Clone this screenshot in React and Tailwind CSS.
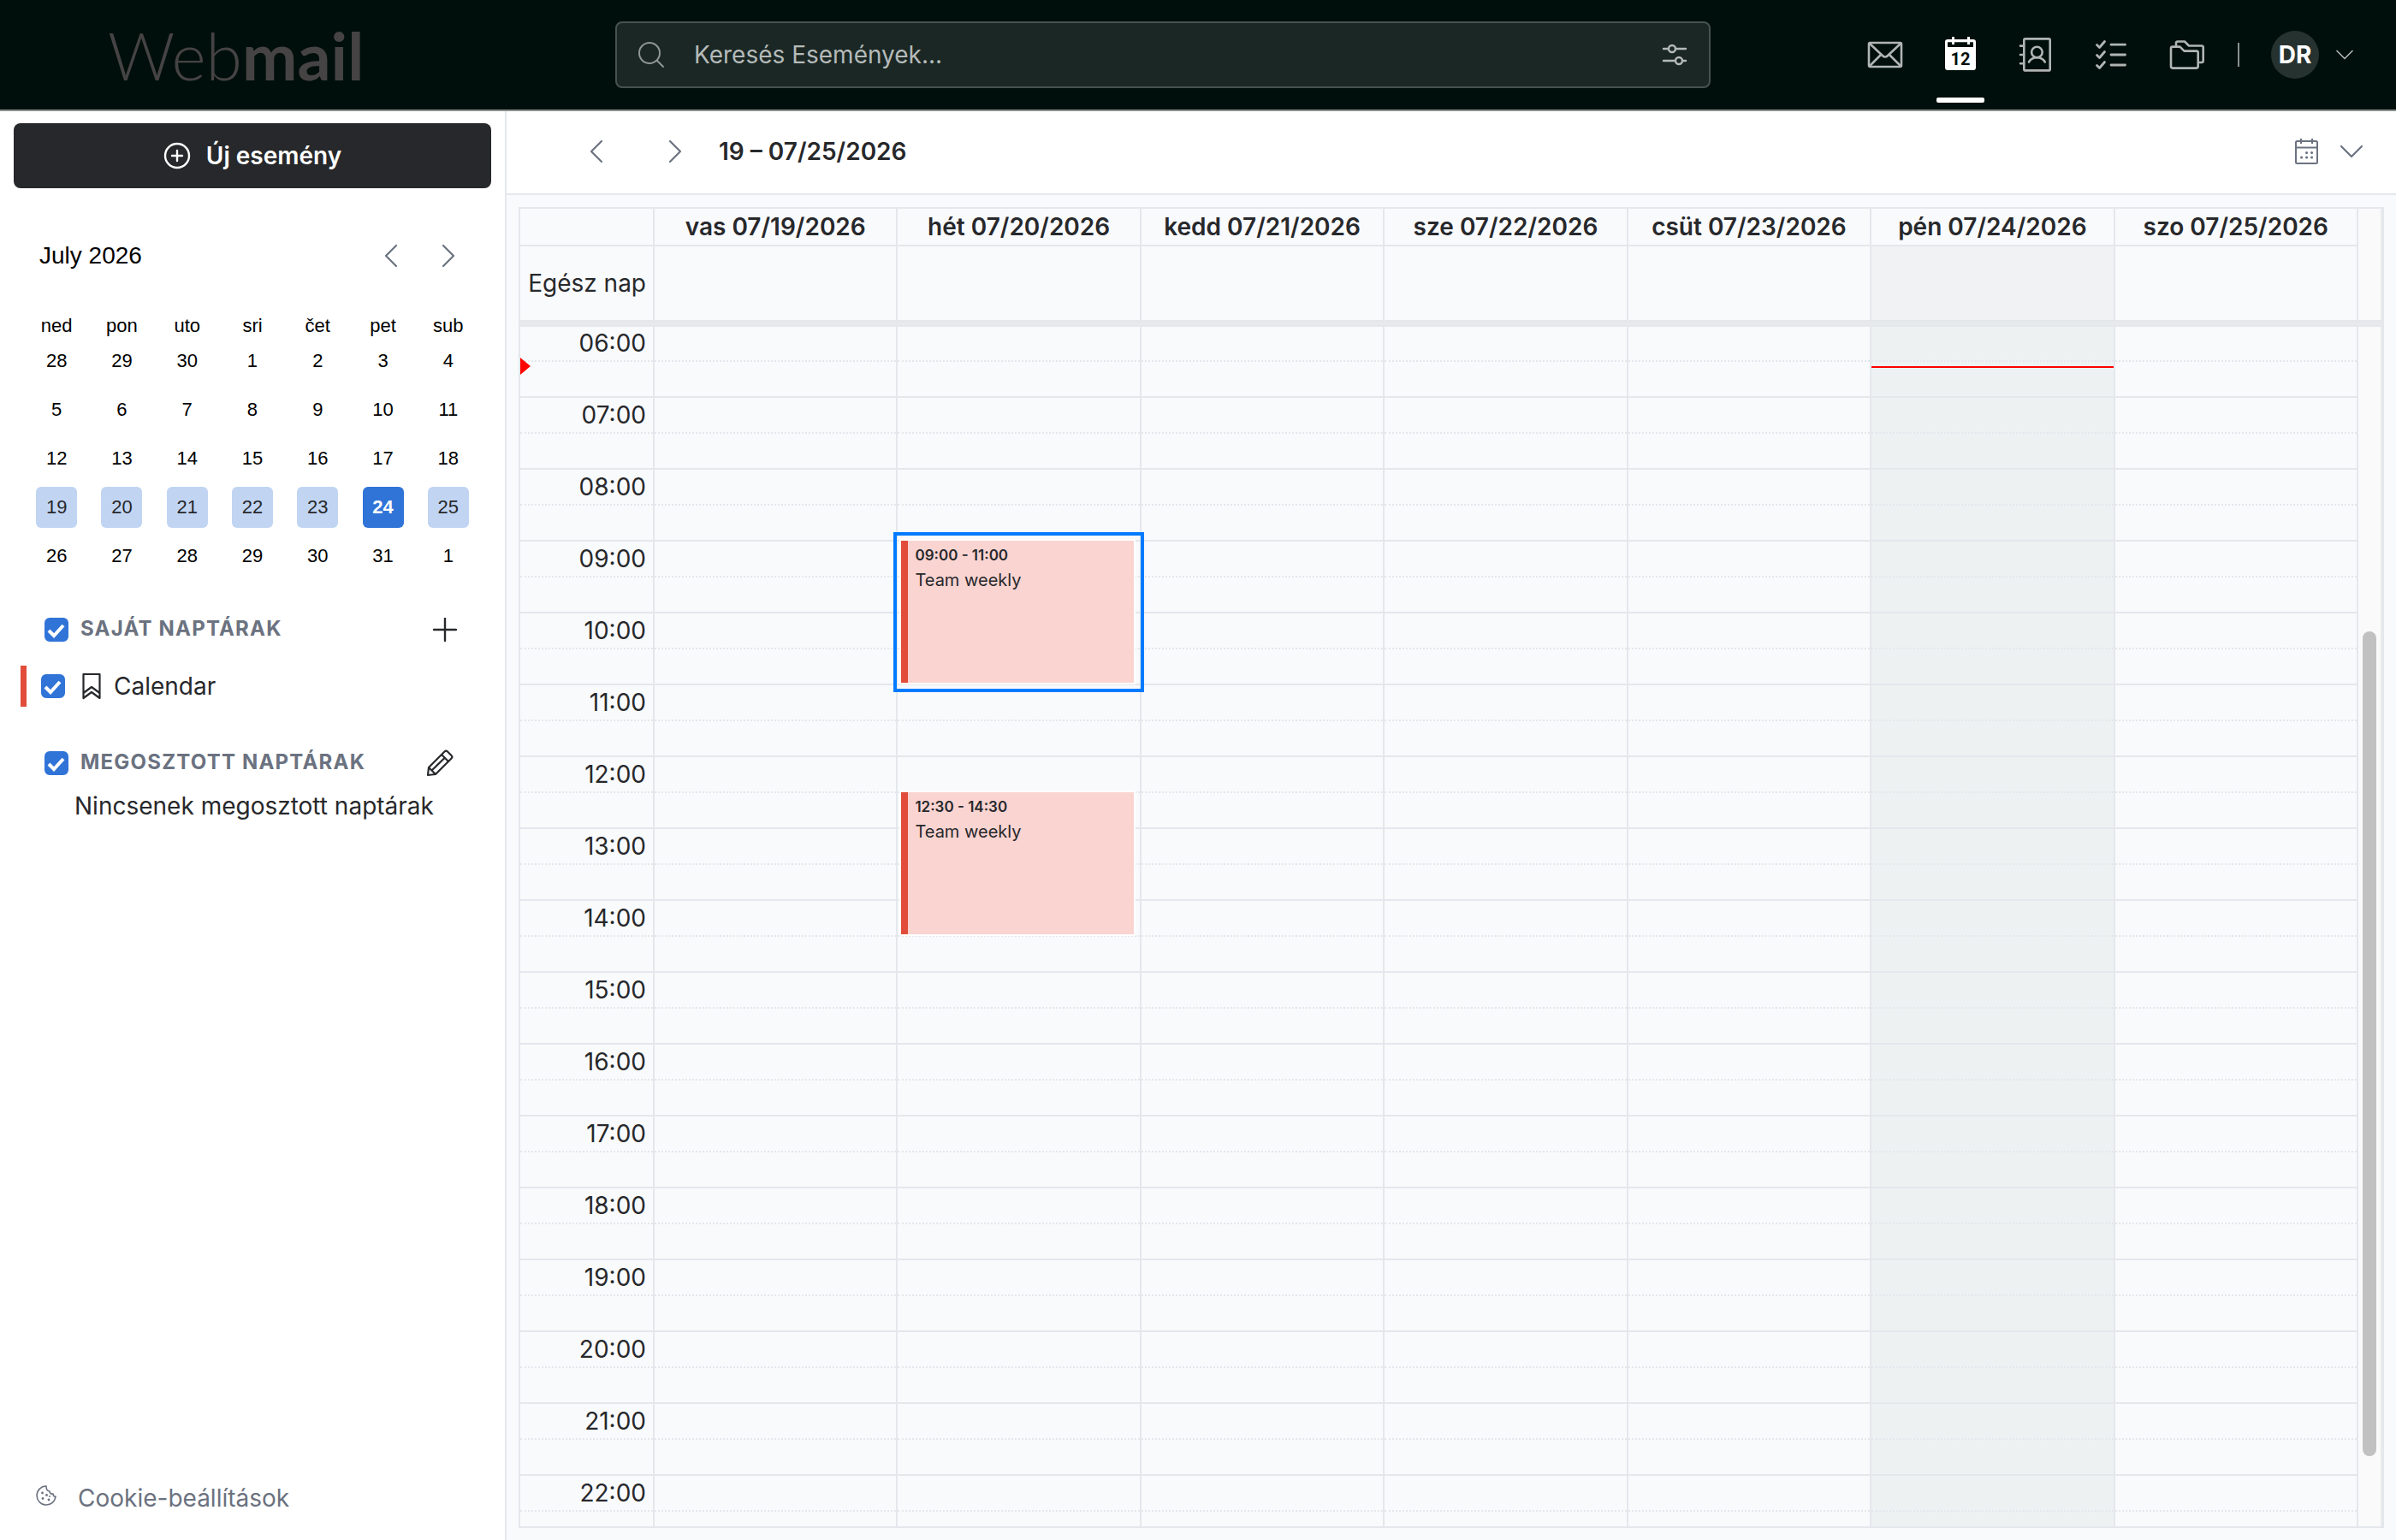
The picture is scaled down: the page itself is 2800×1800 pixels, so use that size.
import { useState } from 'react';

const hours = ['06:00', '07:00', '08:00', '09:00', '10:00', '11:00', '12:00', '13:00', '14:00', '15:00', '16:00', '17:00', '18:00', '19:00', '20:00', '21:00', '22:00'];

const days = [
  { label: 'vas 07/19/2026' },
  {
    label: 'hét 07/20/2026',
    events: [
      { time: '09:00 - 11:00', title: 'Team weekly', start: 9, end: 11 },
      { time: '12:30 - 14:30', title: 'Team weekly', start: 12.5, end: 14.5 },
    ],
  },
  { label: 'kedd 07/21/2026' },
  { label: 'sze 07/22/2026' },
  { label: 'csüt 07/23/2026' },
  { label: 'pén 07/24/2026', today: true },
  { label: 'szo 07/25/2026' },
];

const FIRST_HOUR = 6;
const HOUR_HEIGHT = 84;

const weekdays = ['ned', 'pon', 'uto', 'sri', 'čet', 'pet', 'sub'];
const weeks = [
  [28, 29, 30, 1, 2, 3, 4],
  [5, 6, 7, 8, 9, 10, 11],
  [12, 13, 14, 15, 16, 17, 18],
  [19, 20, 21, 22, 23, 24, 25],
  [26, 27, 28, 29, 30, 31, 1],
];

function Chevron({ dir, className }) {
  const points = {
    left: '19,4 7,16 19,28',
    right: '7,4 19,16 7,28',
    down: '4,10 16,22 28,10',
  };
  return (
    <svg viewBox={dir === 'down' ? '0 0 32 32' : '0 0 26 32'} className={className} fill="none" stroke="currentColor" strokeWidth="2.2" strokeLinecap="round" strokeLinejoin="round">
      <polyline points={points[dir]} />
    </svg>
  );
}

function MailIcon() {
  return (
    <svg viewBox="0 0 48 48" className="size-12" fill="none" stroke="currentColor" strokeWidth="2.6" strokeLinejoin="round">
      <rect x="5" y="10" width="38" height="28" rx="1.5" />
      <path d="M6 11l15.500 14.500a3.600 3.600 0 0 0 5 0L42 11M6 37l13.500-13.500M42 37L28.500 23.500" />
    </svg>
  );
}

function CalendarIcon() {
  return (
    <svg viewBox="0 0 48 48" className="size-12">
      <path fill="currentColor" fillRule="evenodd" d="M9 6h5V3h3v3h15V3h3v3h4a3 3 0 0 1 3 3v30a3 3 0 0 1-3 3H9a3 3 0 0 1-3-3V9a3 3 0 0 1 3-3zM9 9.300V15h30V9.300h-4V12h-3V9.300H17V12h-3V9.300z" />
      <text x="24" y="36" textAnchor="middle" className="fill-[#000f0b] font-['Roboto'] text-[20px] font-bold">12</text>
    </svg>
  );
}

function ContactsIcon() {
  return (
    <svg viewBox="0 0 48 48" className="size-12" fill="none" stroke="currentColor" strokeWidth="2.6" strokeLinecap="round">
      <rect x="10.3" y="5.400" width="30.400" height="37" rx="1.5" />
      <path d="M6 13.600h4M6 24h4M6 34.300h4" />
      <circle cx="25.400" cy="21" r="6.300" />
      <path d="M16 32.500c1.700-3 5-5.200 9.400-5.200s7.700 2.200 9.400 5.200" />
    </svg>
  );
}

function TasksIcon() {
  return (
    <svg viewBox="0 0 48 48" className="size-12" fill="none" stroke="currentColor" strokeWidth="2.800" strokeLinecap="round" strokeLinejoin="round">
      <path d="M24 12.200h16.500M24 24h16.500M24 36h16.500" />
      <path d="M7.500 12.500l3 3 6-7M7.500 24.500l3 3 6-7M7.500 36.500l3 3 6-7" />
    </svg>
  );
}

function FoldersIcon() {
  return (
    <svg viewBox="0 0 48 48" className="size-12" fill="none" stroke="currentColor" strokeWidth="2.600" strokeLinejoin="round">
      <path d="M6 16.600a2 2 0 0 1 2-2h8.500l5 5h14.200a2 2 0 0 1 2 2v16a2 2 0 0 1-2 2H8a2 2 0 0 1-2-2z" />
      <path d="M12 14.500v-4a2 2 0 0 1 2-2h8l5 5h14.700a2 2 0 0 1 2 2v15.500a2 2 0 0 1-2 2h-4" />
    </svg>
  );
}

const navItems = [
  { name: 'Levelek', icon: MailIcon },
  { name: 'Naptár', icon: CalendarIcon, active: true },
  { name: 'Névjegyek', icon: ContactsIcon },
  { name: 'Feladatok', icon: TasksIcon },
  { name: 'Fájlok', icon: FoldersIcon },
];

function Header() {
  return (
    <header className="flex h-[130px] shrink-0 items-center border-b-2 border-[#8b918f] bg-[#000f0b]">
      <div className="w-[719px] shrink-0 pl-[126px] font-['Lato'] text-[77px] leading-none text-[#464344]">
        <span className="font-light">Web</span>
        <span className="font-bold">mail</span>
      </div>
      <div className="flex h-[78px] flex-1 items-center rounded-lg border-2 border-[#46524f] bg-[#1a2724] px-6">
        <svg viewBox="0 0 32 32" className="size-8 shrink-0 text-[#8f9694]" fill="none" stroke="currentColor" strokeWidth="2" strokeLinecap="round">
          <circle cx="14" cy="14" r="12" />
          <path d="M22.500 22.500L30 30" />
        </svg>
        <input type="text" aria-label="Keresés" placeholder="Keresés Események..." className="ml-[34px] min-w-0 flex-1 bg-transparent text-[28px] text-white outline-none placeholder:text-[#b5bab9]" />
        <button aria-label="Szűrők" className="text-[#b5bab9]">
          <svg viewBox="0 0 32 32" className="size-8" fill="none" stroke="currentColor" strokeWidth="2.400" strokeLinecap="round">
            <path d="M3 9h6M17 9h12M3 23h14M25 23h4" />
            <circle cx="13" cy="9" r="4" />
            <circle cx="21" cy="23" r="4" />
          </svg>
        </button>
      </div>
      <div className="flex h-full w-[801px] shrink-0 items-center justify-end pr-12">
        <nav className="flex h-full gap-8">
          {navItems.map(({ name, icon: Icon, active }) => (
            <button key={name} aria-label={name} className={active ? 'relative flex w-14 items-center justify-center text-white' : 'flex w-14 items-center justify-center text-[#b0b5b4]'}>
              <Icon />
              {active && <span className="absolute inset-x-0 bottom-2 h-1.5 rounded-xs bg-white" />}
            </button>
          ))}
        </nav>
        <span className="ml-8 h-7 w-0.5 bg-[#8b918f]" />
        <button className="ml-[37px] flex items-center gap-[18px]">
          <span className="flex size-14 items-center justify-center rounded-full bg-[#26322f] text-[28px] font-bold text-white">DR</span>
          <Chevron dir="down" className="size-6 text-[#b0b5b4]" />
        </button>
      </div>
    </header>
  );
}

function MiniCalendar() {
  return (
    <section className="px-7 pt-[57px] font-['Liberation_Sans',sans-serif] text-[22px] text-black">
      <div className="flex h-11 items-center pl-[18px] text-[#6b7280]">
        <h2 className="flex-1 text-[28px] text-black">July 2026</h2>
        <button aria-label="Előző hónap" className="pr-[41px]"><Chevron dir="left" className="h-8 w-[26px]" /></button>
        <button aria-label="Következő hónap" className="pr-[25px]"><Chevron dir="right" className="h-8 w-[26px]" /></button>
      </div>
      <table className="mt-12 w-full table-fixed text-center">
        <thead>
          <tr className="h-6">
            {weekdays.map((d) => <th key={d} className="p-0 font-normal leading-6">{d}</th>)}
          </tr>
        </thead>
        <tbody>
          {weeks.map((week, w) => (
            <tr key={w} className="h-[57px]">
              {week.map((d) => (
                <td key={d}>
                  {w === 3 ? (
                    <button className={d === 24 ? 'size-12 rounded-md bg-[#3074d8] font-bold text-white' : 'size-12 rounded-md bg-[#c1d5f3] text-[#27282b]'}>{d}</button>
                  ) : (
                    <button className="size-12">{d}</button>
                  )}
                </td>
              ))}
            </tr>
          ))}
        </tbody>
      </table>
    </section>
  );
}

function Checkbox({ id }) {
  const [checked, setChecked] = useState(true);
  return (
    <span className="relative size-7 shrink-0">
      <input id={id} type="checkbox" checked={checked} onChange={() => setChecked(!checked)} className="block size-7 appearance-none rounded-md border-2 border-[#3074d8] checked:bg-[#3074d8]" />
      <svg viewBox="0 0 28 28" className="pointer-events-none absolute inset-0 size-7" fill="none" stroke="white" strokeWidth="4">
        <path d="M5 15l6 6L22 9" />
      </svg>
    </span>
  );
}

function Sidebar() {
  return (
    <aside className="flex w-[592px] shrink-0 flex-col border-r-2 border-[#e4e7ec] bg-white">
      <button className="mx-4 mt-3.5 flex h-[76px] items-center justify-center gap-[18px] rounded-lg bg-[#27282b] text-[28px] font-semibold text-white">
        <svg viewBox="0 0 32 32" className="size-8" fill="none" stroke="currentColor" strokeWidth="2.400" strokeLinecap="round">
          <circle cx="16" cy="16" r="14" />
          <path d="M16 10v12M10 16h12" />
        </svg>
        Új esemény
      </button>
      <MiniCalendar />
      <section className="mt-9 text-[28px] text-[#27282b]">
        <div className="flex h-11 items-center pr-14 pl-[52px]">
          <Checkbox id="own" />
          <label htmlFor="own" className="ml-3.5 flex-1 pb-0.5 text-2xl font-bold tracking-wider text-[#6b7280]">SAJÁT NAPTÁRAK</label>
          <button aria-label="Új naptár">
            <svg viewBox="0 0 28 28" className="size-7" stroke="currentColor" strokeWidth="2.400" strokeLinecap="round">
              <path d="M14 1v26M1 14h26" />
            </svg>
          </button>
        </div>
        <div className="mt-5 ml-6 flex h-12 items-center border-l-[7px] border-[#e24c3a] pl-[17px]">
          <Checkbox id="calendar" />
          <svg viewBox="0 0 22 32" className="ml-5 h-8 w-[22px]" fill="none" stroke="currentColor" strokeWidth="2.200" strokeLinejoin="round">
            <path d="M1.500 2h19v28l-9.500-7-9.500 7zM1.500 24l9.500-7 9.500 7" />
          </svg>
          <label htmlFor="calendar" className="ml-[15px]">Calendar</label>
        </div>
        <div className="mt-11 flex h-11 items-center pr-[60px] pl-[52px]">
          <Checkbox id="shared" />
          <label htmlFor="shared" className="ml-3.5 flex-1 pb-0.5 text-2xl font-bold tracking-wider text-[#6b7280]">MEGOSZTOTT NAPTÁRAK</label>
          <button aria-label="Szerkesztés">
            <svg viewBox="0 0 32 32" className="size-8" fill="none" stroke="currentColor" strokeWidth="2.200" strokeLinejoin="round">
              <path d="M2 30l1-9L21.500 2.500a2.500 2.500 0 0 1 3.500 0L29.500 7a2.500 2.500 0 0 1 0 3.500L11 29zM18 6l8 8M3 21l8 8M6.500 24.500L22 9.500" />
            </svg>
          </button>
        </div>
        <p className="pl-[87px] leading-[56px]">Nincsenek megosztott naptárak</p>
      </section>
      <a href="#cookies" className="mt-auto mb-[25px] flex h-12 items-center pl-[42px] text-[28px] text-[#6b7280]">
        <svg viewBox="0 0 24 24" className="mb-1.5 size-6" fill="none" stroke="currentColor" strokeWidth="1.600" strokeLinejoin="round">
          <path d="M12 1a11 11 0 1 0 11 12c-2 .5-3-1-3-3-3 .5-4-1-4-3-3 0-4-2-4-6z" />
          <g fill="currentColor" stroke="none">
            <circle cx="7.500" cy="9" r="1.400" />
            <circle cx="12.500" cy="11.500" r="1.400" />
            <circle cx="8" cy="15.500" r="1.400" />
            <circle cx="15" cy="17" r="1.400" />
            <circle cx="16" cy="13" r="1" />
          </g>
        </svg>
        <span className="ml-[25px]">Cookie-beállítások</span>
      </a>
    </aside>
  );
}

function Toolbar() {
  return (
    <div className="flex h-[98px] shrink-0 items-center border-b-2 border-[#e4e7ec] bg-white pr-9 pb-0.5 pl-[92px] text-[#6b7280]">
      <button aria-label="Előző hét"><Chevron dir="left" className="h-8 w-[26px]" /></button>
      <button aria-label="Következő hét" className="ml-[66px]"><Chevron dir="right" className="h-8 w-[26px]" /></button>
      <h1 className="ml-[38px] flex-1 text-[28px] font-semibold text-[#27282b]">19 – 07/25/2026</h1>
      <button aria-label="Nézet" className="flex items-center gap-5">
        <svg viewBox="0 0 32 32" className="size-8" fill="none" stroke="currentColor" strokeWidth="2">
          <rect x="3" y="4" width="25" height="26" rx="1.5" />
          <path d="M3 11.500h25M9 1v6M22 1v6" />
          <path strokeWidth="3" strokeLinecap="round" d="M15.500 17.500h.1M21.500 17.500h.1M9.500 23h.1M15.500 23h.1M21.500 23h.1" />
        </svg>
        <Chevron dir="down" className="size-8" />
      </button>
    </div>
  );
}

function EventCard({ event, selected }) {
  const top = (event.start - FIRST_HOUR) * HOUR_HEIGHT - 11;
  const height = (event.end - event.start) * HOUR_HEIGHT + 19;
  return (
    <button
      style={{ top, height }}
      className={selected ? 'absolute -inset-x-[5px] z-10 border-4 border-[#007bff] pt-1 pr-1.5 pb-[5px] pl-[3px] text-left' : 'absolute -inset-x-[5px] border-4 border-transparent pt-1 pr-1.5 pb-[5px] pl-[3px] text-left'}
    >
      <span className="block h-full border-2 border-white">
        <span className="block h-full border-l-8 border-[#e24c3a] bg-[#fad4d1] pt-[5px] pl-2 text-[#27282b]">
          <span className="block text-[17px] leading-6 font-semibold">{event.time}</span>
          <span className="block text-[20px] leading-[34px]">{event.title}</span>
        </span>
      </span>
    </button>
  );
}

function WeekView() {
  return (
    <div className="m-3.5 flex min-h-0 flex-1 flex-col border-2 border-[#e4e7ec] text-[28px] text-[#27282b]">
      <div className="flex h-11 shrink-0">
        <div className="w-[157px] shrink-0 border-r-2 border-b-2 border-[#e4e7ec]" />
        <div className="grid flex-1 grid-cols-7">
          {days.map((day) => (
            <div key={day.label} className="truncate border-r-2 border-b-2 border-[#e4e7ec] text-center leading-[42px] font-semibold">{day.label}</div>
          ))}
        </div>
        <div className="w-7 shrink-0 border-r-2 border-[#e8eaec] bg-[#fafafa]" />
      </div>
      <div className="flex h-[86px] shrink-0">
        <div className="w-[157px] shrink-0 border-r-2 border-[#e4e7ec] pr-2 text-right leading-[86px] whitespace-nowrap">Egész nap</div>
        <div className="grid flex-1 grid-cols-7">
          {days.map((day) => (
            <div key={day.label} className={day.today ? 'border-r-2 border-[#e4e7ec] bg-[#f1f2f4]' : 'border-r-2 border-[#e4e7ec]'} />
          ))}
        </div>
        <div className="w-7 shrink-0 border-r-2 border-[#e8eaec] bg-[#fafafa]" />
      </div>
      <div className="h-2 shrink-0 border-y-2 border-[#e4e7ec] bg-[#e6eaed]" />
      <div className="flex min-h-0 flex-1">
        <div className="flex min-w-0 flex-1 overflow-hidden">
          <div className="relative -mt-px w-[157px] shrink-0 border-r-2 border-[#e4e7ec]">
            {hours.map((hour) => (
              <div key={hour} className="h-[84px] border-b-2 border-[#e4e7ec]">
                <div className="h-[42px] border-b-2 border-dotted border-[#e4e7ec] pr-2 text-right leading-10">{hour}</div>
              </div>
            ))}
            <svg viewBox="0 0 12 20" className="absolute top-[37px] left-0 h-5 w-3"><path d="M0 0l12 10L0 20z" fill="#ff0000" /></svg>
          </div>
          <div className="-mt-px grid flex-1 grid-cols-7">
            {days.map((day) => (
              <div key={day.label} className={day.today ? 'relative border-r-2 border-[#e4e7ec] bg-[#edf1f2]' : 'relative border-r-2 border-[#e4e7ec]'}>
                {hours.map((hour) => (
                  <div key={hour} className="h-[84px] border-b-2 border-[#e4e7ec]">
                    <div className="h-[42px] border-b-2 border-dotted border-[#e4e7ec]" />
                  </div>
                ))}
                {day.today && <div className="absolute inset-x-0 top-[47px] h-0.5 bg-[#ff0000]" />}
                {day.events?.map((event, i) => <EventCard key={event.time} event={event} selected={i === 0} />)}
              </div>
            ))}
          </div>
        </div>
        <div className="flex w-7 shrink-0 flex-col items-center border-r-2 border-[#e8eaec] bg-[#fafafa]">
          <div className="grow-[356]" />
          <div className="w-4 grow-[963] rounded-full bg-[#c1c1c1]" />
          <div className="grow-[82]" />
        </div>
      </div>
    </div>
  );
}

export default function App() {
  return (
    <div className="flex h-screen flex-col font-['Inter',sans-serif]">
      <Header />
      <div className="flex min-h-0 flex-1">
        <Sidebar />
        <main className="flex min-w-0 flex-1 flex-col bg-[#f9fafc]">
          <Toolbar />
          <WeekView />
        </main>
      </div>
    </div>
  );
}
